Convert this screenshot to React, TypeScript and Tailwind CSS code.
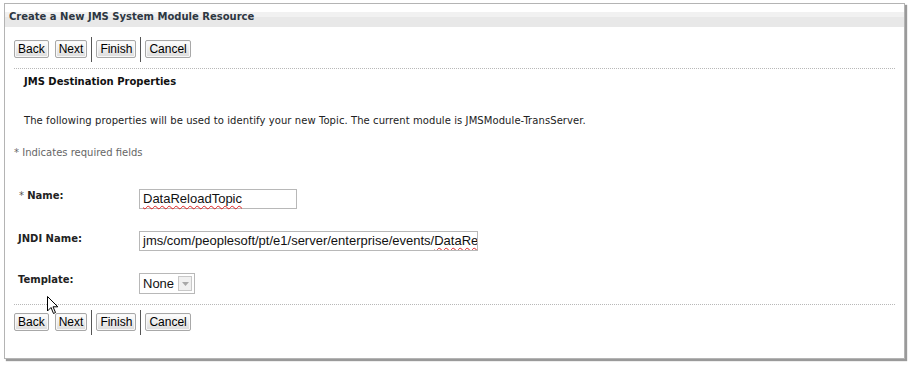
import React from 'react'

const ui = { fontFamily: 'Tahoma, "DejaVu Sans", "Liberation Sans", sans-serif' }
const arial = { fontFamily: '"Liberation Sans", Arial, sans-serif' }

function Btn({ label }: { label: string }) {
  return (
    <button
      style={arial}
      className="h-[18px] px-[3px] text-[12px] leading-none text-black border border-[#a8a8a8] rounded-[2px] bg-gradient-to-b from-[#ffffff] to-[#dcdcdc] shadow-[inset_0_0_0_1px_#f8f8f8]"
    >
      {label}
    </button>
  )
}

function ButtonBar() {
  return (
    <div className="flex items-center h-[26px]">
      <div className="flex items-center gap-[6px]">
        <Btn label="Back" />
        <Btn label="Next" />
      </div>
      <div className="w-px h-[25px] bg-[#555] mx-[4px]" />
      <Btn label="Finish" />
      <div className="w-px h-[25px] bg-[#555] mx-[4px]" />
      <Btn label="Cancel" />
    </div>
  )
}

export default function App() {
  return (
    <div className="w-[911px] h-[365px] bg-white relative" style={ui}>
      <div className="absolute left-[4px] top-[3px] w-[901px] h-[356px] border border-[#b4b4b4] bg-white shadow-[2px_2px_1px_#9a9a9a]">
        {/* header */}
        <div className="h-[23px] bg-[linear-gradient(to_bottom,#ffffff_0px,#ffffff_8px,#f1f1f1_8px,#f1f1f1_13px,#e8e8e8_13px)] flex items-end pb-[5px] pl-[4px]">
          <span className="text-[10px] font-bold text-[#2d3742] leading-none">
            Create a New JMS System Module Resource
          </span>
        </div>

        <div className="pl-[9px] pr-[9px]">
          <div className="mt-[9px]">
            <ButtonBar />
          </div>
          <div className="mt-[6px] border-t border-dotted border-[#b8b8b8]" />

          <div className="pl-[10px] mt-[6px] text-[10px] font-bold text-[#111] leading-[13px]">
            JMS Destination Properties
          </div>
          <div className="pl-[10px] mt-[26px] text-[10px] tracking-[0.08px] text-[#222] leading-[13px]">
            The following properties will be used to identify your new Topic. The current module is JMSModule-TransServer.
          </div>
          <div className="mt-[19px] text-[10px] text-[#666] leading-[13px]">
            * Indicates required fields
          </div>

          <div className="mt-[30px] flex flex-col gap-[21px]">
            <div className="flex items-start h-[21px]">
              <div className="w-[125px] pl-[5px] text-[10px] font-bold text-[#222] leading-[13px] pt-[0px]">
                <span className="font-normal text-[#555]">* </span>Name:
              </div>
              <div
                style={arial}
                className="w-[158px] h-[20px] border border-[#b8b8b8] flex items-center px-[3px] text-[13px] text-[#111]"
              >
                <span className="underline decoration-wavy decoration-[#e02020] decoration-1 underline-offset-2">DataReloadTopic</span>
              </div>
            </div>
            <div className="flex items-start h-[21px]">
              <div className="w-[125px] pl-[4px] text-[10px] font-bold text-[#222] leading-[13px] pt-[1px]">
                JNDI Name:
              </div>
              <div
                style={arial}
                className="w-[339px] h-[20px] border border-[#b8b8b8] flex items-center px-[3px] text-[13px] text-[#111] overflow-hidden whitespace-nowrap"
              >
                jms/com/peoplesoft/pt/e1/server/enterprise/events/
                <span className="underline decoration-wavy decoration-[#e02020] decoration-1 underline-offset-2">DataReloadTopic</span>
              </div>
            </div>
            <div className="flex items-start h-[21px]">
              <div className="w-[125px] pl-[4px] text-[10px] font-bold text-[#222] leading-[13px] pt-[0px]">
                Template:
              </div>
              <div
                style={arial}
                className="w-[56px] h-[21px] border border-[#b8b8b8] flex items-center pl-[3px] pr-[2px] text-[13px] text-[#111]"
              >
                <span className="flex-1">None</span>
                <span className="w-[14px] h-[15px] border border-[#c8c8c8] bg-[#f0f0f0] flex items-center justify-center">
                  <svg width="7" height="4" viewBox="0 0 7 4">
                    <path d="M0 0 L7 0 L3.5 4 Z" fill="#a8a8a8" />
                  </svg>
                </span>
              </div>
            </div>
          </div>

          <div className="mt-[10px] border-t border-dotted border-[#b8b8b8]" />
          <div className="mt-[4px]">
            <ButtonBar />
          </div>
        </div>
      </div>

      {/* mouse cursor */}
      <svg className="absolute left-[47px] top-[296px]" width="12" height="19" viewBox="0 0 12 19">
        <path d="M0.5 0.5 L0.5 15 L4 11.5 L6.5 17.5 L8.5 16.5 L6 10.8 L10.8 10.8 Z" fill="#fff" stroke="#000" strokeWidth="1" />
      </svg>
    </div>
  )
}
